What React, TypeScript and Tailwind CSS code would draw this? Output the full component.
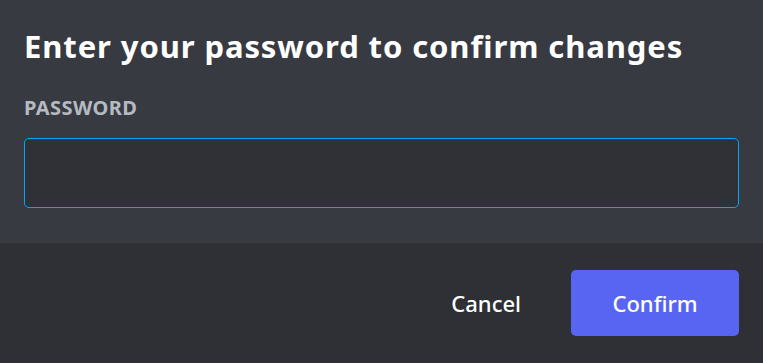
import React from "react";

export default function App() {
  return (
    <div
      className="w-[763px] h-[363px] flex flex-col overflow-hidden"
      style={{ fontFamily: '"Noto Sans", "Open Sans", sans-serif' }}
    >
      <div className="h-[243px] bg-[#383a42] px-[24px] pt-[26px] flex flex-col">
        <h1 className="text-[31px] leading-[40px] font-bold text-white tracking-[0.9px]">
          Enter your password to confirm changes
        </h1>
        <label className="mt-[30px] text-[20px] leading-[24px] font-bold text-[#b5bac1] uppercase tracking-[0.4px]">
          Password
        </label>
        <input
          type="password"
          className="mt-[18px] h-[70px] w-full rounded-[5px] border border-[#00a8fc] bg-[#2f3136] outline-none text-white px-3"
        />
      </div>
      <div className="flex-1 bg-[#2e3035] flex items-center justify-end pr-[24px]">
        <button className="mr-[26px] px-[24px] h-[66px] text-[22px] font-medium text-white">
          Cancel
        </button>
        <button className="w-[168px] h-[66px] rounded-[5px] bg-[#5865f2] text-[22px] font-medium text-white">
          Confirm
        </button>
      </div>
    </div>
  );
}
